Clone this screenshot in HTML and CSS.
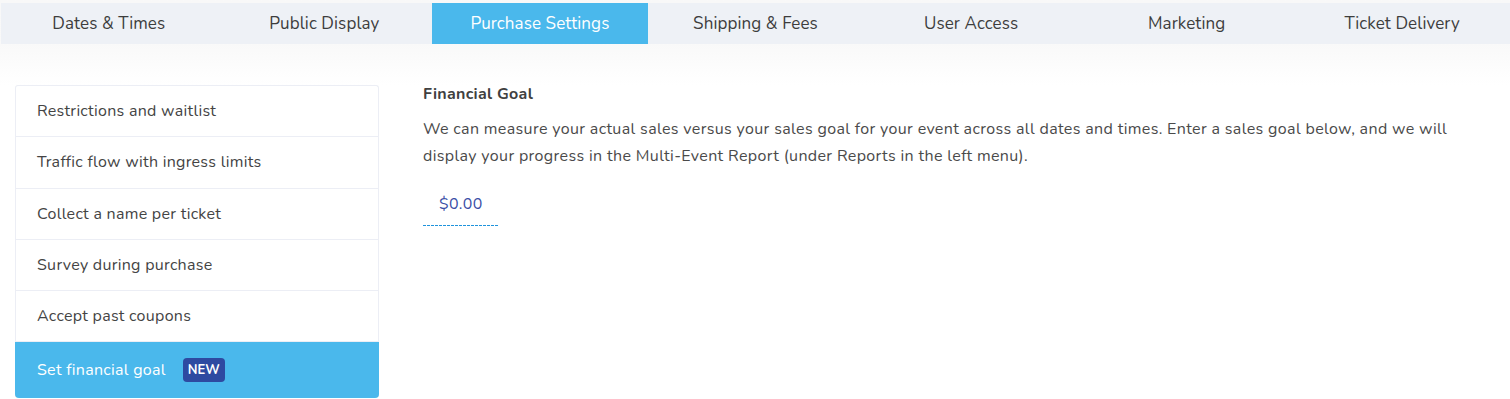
FILE: index.html
```html
<!DOCTYPE html>
<html>
<head>
<meta charset="utf-8">
<link rel="stylesheet" href="styles.css">
</head>
<body>
<header class="header">
  <nav class="tabs">
    <div class="tab">Dates &amp; Times</div>
    <div class="tab">Public Display</div>
    <div class="tab active">Purchase Settings</div>
    <div class="tab">Shipping &amp; Fees</div>
    <div class="tab">User Access</div>
    <div class="tab">Marketing</div>
    <div class="tab">Ticket Delivery</div>
  </nav>
</header>
<div class="main">
  <ul class="menu">
    <li class="item">Restrictions and waitlist</li>
    <li class="item">Traffic flow with ingress limits</li>
    <li class="item">Collect a name per ticket</li>
    <li class="item">Survey during purchase</li>
    <li class="item">Accept past coupons</li>
    <li class="item selected">Set financial goal <span class="badge">NEW</span></li>
  </ul>
  <section class="content">
    <h2 class="title">Financial Goal</h2>
    <p class="desc">We can measure your actual sales versus your sales goal for your event across all dates and times. Enter a sales goal below, and we will display your progress in the Multi-Event Report (under Reports in the left menu).</p>
    <div class="goal">$0.00</div>
  </section>
</div>
</body>
</html>
```

FILE: styles.css
```css
* { box-sizing: border-box; }
html, body { margin: 0; padding: 0; }
body {
  background: #ffffff;
  font-family: "Nunito", "Lato", "Noto Sans", sans-serif;
  color: #4a4a4a;
  width: 1510px;
  height: 399px;
  overflow: hidden;
}
.header {
  padding-top: 3px;
  padding-bottom: 41px;
  background: linear-gradient(#f8f8f8 0, #f9f9f9 44px, #ffffff 85px);
}
.tabs {
  display: grid;
  grid-template-columns: repeat(7, 1fr);
  margin-left: 1px;
  height: 41px;
  background: #eef1f6;
}
.tab {
  display: flex;
  align-items: center;
  justify-content: center;
  font-size: 17px;
  color: #3d3d3d;
  letter-spacing: 0.1px;
}
.tab.active { background: #4ab8ec; color: #ffffff; }
.main {
  display: flex;
  padding-left: 15px;
}
.menu {
  list-style: none;
  margin: 0;
  padding: 0;
  width: 364px;
  border: 1px solid #eceef5;
  border-bottom: none;
  border-radius: 3px;
  background: #fff;
  align-self: flex-start;
}
.item {
  height: 51.3px;
  display: flex;
  align-items: center;
  padding-left: 21px;
  font-size: 16px;
  letter-spacing: 0.28px;
  color: #444444;
  border-bottom: 1px solid #eceef5;
}
.item.selected {
  background: #4ab8ec;
  color: #ffffff;
  height: 56px;
  margin: 0 -1px;
  padding-left: 22px;
  border-bottom: none;
  border-radius: 0 0 4px 4px;
}
.badge {
  margin-left: 17px;
  background: #2e4aa1;
  color: #fff;
  font-size: 13px;
  font-weight: 700;
  letter-spacing: 0;
  padding: 3px 5px;
  border-radius: 4px;
  line-height: 18px;
}
.content {
  padding-left: 44px;
  padding-right: 40px;
  flex: 1;
}
.title {
  margin: -1px 0 0;
  font-size: 16px;
  font-weight: 700;
  letter-spacing: 0.3px;
  color: #404040;
  line-height: 20px;
}
.desc {
  margin: 11.5px 0 0;
  font-size: 16px;
  line-height: 27px;
  letter-spacing: 0.35px;
  color: #4a4a4a;
  max-width: 1040px;
}
.goal {
  margin-top: 24.5px;
  width: 75px;
  padding: 0 0 12px 16px;
  font-size: 16px;
  line-height: 20px;
  letter-spacing: 0.3px;
  color: #3a4ea6;
  background-image: repeating-linear-gradient(to right, #1f93dc 0, #1f93dc 3px, transparent 3px, transparent 4px);
  background-size: 100% 1px;
  background-position: left bottom;
  background-repeat: no-repeat;
}
```
